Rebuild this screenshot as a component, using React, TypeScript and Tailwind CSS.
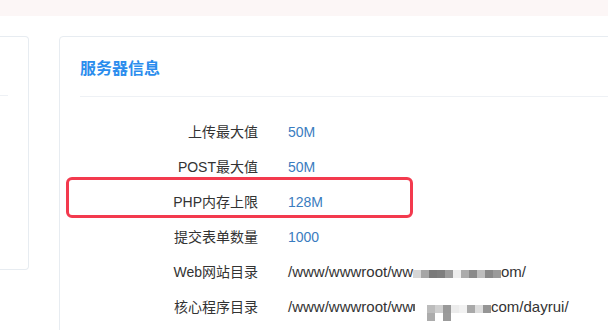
import React from "react";

type Row = {
  label: string;
  value: React.ReactNode;
  blue?: boolean;
};

const webBlocks = ["#d6d6d6", "#a6a6a6", "#7a7a7a", "#7e7e7e", "#9c9c9c", "#ededed", "#acacac", "#8a8a8a", "#bdbdbd", "#888888", "#9a9a9a"];
const coreTop = ["#bcbcbc", "#cfcfcf", "#999999", "#ececec", "#f2f2f2", "#a9a9a9", "#dddddd", "#959595"];
const coreBottom = ["#acacac", "#ffffff", "#9b9b9b", "#ffffff", "#ffffff", "#ffffff", "#ffffff", "#ffffff"];

const Mosaic = ({ top, bottom }: { top: string[]; bottom?: string[] }) => (
  <span className="inline-flex flex-col translate-y-[1px]">
    <span className="flex">
      {top.map((c, i) => (
        <span key={i} className="w-[8px] h-[8px]" style={{ background: c }} />
      ))}
    </span>
    {bottom && (
      <span className="flex">
        {bottom.map((c, i) => (
          <span key={i} className="w-[8px] h-[8px]" style={{ background: c }} />
        ))}
      </span>
    )}
  </span>
);

const rows: Row[] = [
  { label: "上传最大值", value: "50M", blue: true },
  { label: "POST最大值", value: "50M", blue: true },
  { label: "PHP内存上限", value: "128M", blue: true },
  { label: "提交表单数量", value: "1000", blue: true },
  {
    label: "Web网站目录",
    value: (
      <span className="flex items-center text-[15px]">
        <span>/www/wwwroot/ww</span>
        <Mosaic top={webBlocks} />
        <span>om/</span>
      </span>
    ),
  },
  {
    label: "核心程序目录",
    value: (
      <span className="flex items-center text-[15px]">
        <span>/www/wwwroot/ww</span>
        <span className="w-[2px] h-[7px] bg-[#666] mr-[12px]" />
        <span className="translate-y-[4px] flex">
          <Mosaic top={coreTop} bottom={coreBottom} />
        </span>
        <span>com/dayrui/</span>
      </span>
    ),
  },
];

export default function App() {
  return (
    <div
      className="w-[608px] h-[330px] overflow-hidden bg-white relative"
      style={{ fontFamily: '"Liberation Sans", "Noto Sans CJK SC", sans-serif' }}
    >
      <div className="h-[16px] bg-[#fcf6f6]" />
      <div className="flex mt-[20px]">
        {/* left card, mostly off screen */}
        <div className="w-[29px] h-[234px] shrink-0 border border-l-0 border-[#e7ecf1] rounded-r-[4px]">
          <div className="h-[59px] mr-[20px] border-b border-[#eef1f5]" />
        </div>

        {/* server info card */}
        <div className="relative ml-[30px] w-[600px] shrink-0 h-[320px] border border-[#e7ecf1] rounded-[4px] px-[20px]">
          <div className="h-[60px] pt-[21px] border-b border-[#eef1f5]">
            <h3 className="text-[16px] leading-[22px] font-bold text-[#2b8ded]">服务器信息</h3>
          </div>

          <div className="pt-[18px]">
            {rows.map((row) => (
              <div key={row.label} className="flex items-center h-[35px] text-[14px]">
                <div className="w-[178px] text-right text-[#333]">{row.label}</div>
                <div className={"ml-[30px] " + (row.blue ? "text-[#3a7cc0]" : "text-[#333]")}>{row.value}</div>
              </div>
            ))}
          </div>

          {/* highlight annotation */}
          <div className="absolute left-[6px] top-[140px] w-[347px] h-[41px] border-[3px] border-[#f33a4e] rounded-[6px]" />
        </div>
      </div>
    </div>
  );
}
